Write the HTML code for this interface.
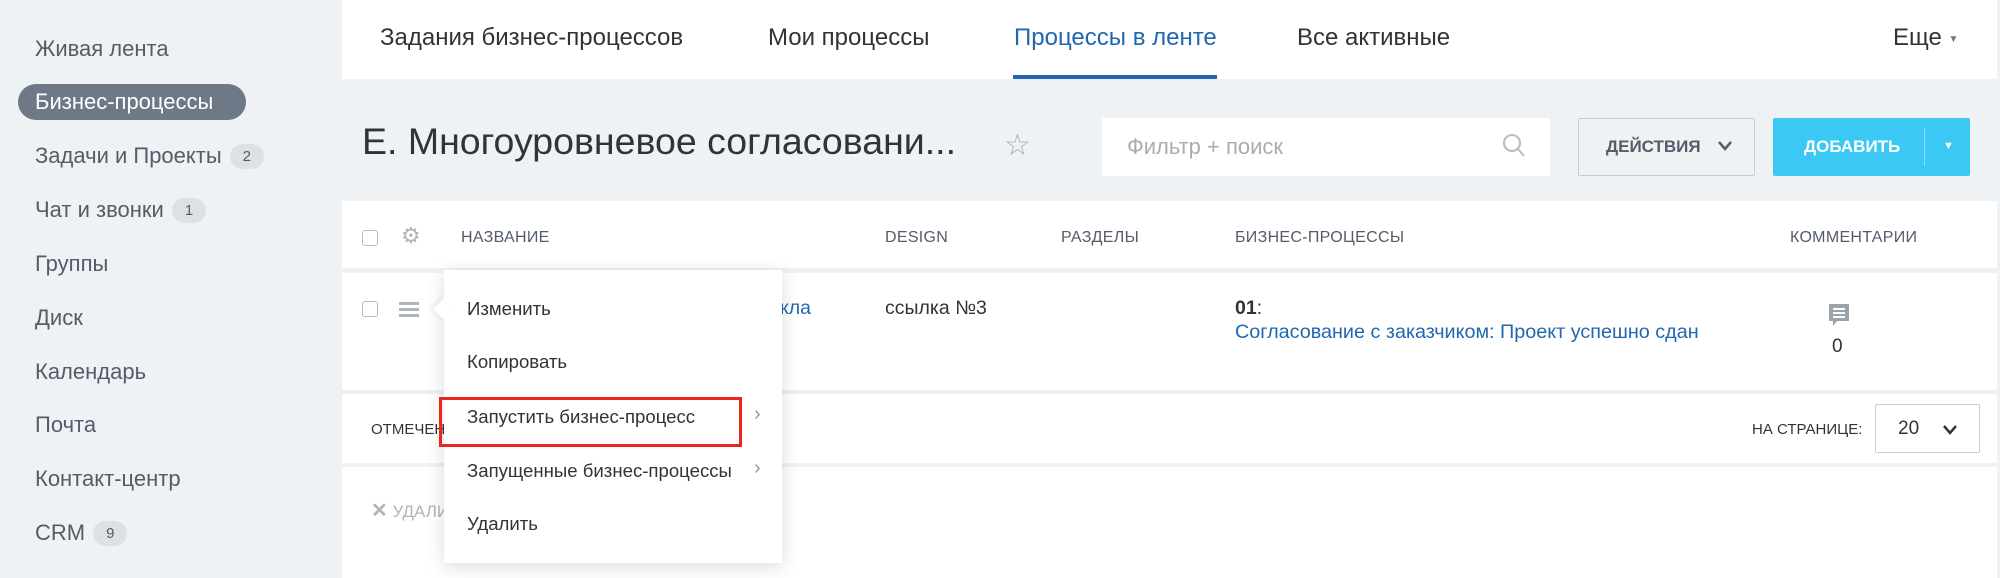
<!DOCTYPE html>
<html><head><meta charset="utf-8"><style>
*{margin:0;padding:0;box-sizing:border-box}
body{width:2000px;height:578px;overflow:hidden;background:#eef2f4;font-family:"Liberation Sans",sans-serif;position:relative;color:#333}
.a{position:absolute;white-space:nowrap}
.side{font-size:22px;color:#535c69}
.badge{display:inline-block;background:#dde1e6;color:#535c69;font-size:15px;border-radius:14px;padding:4px 13px;margin-left:8px;vertical-align:2px}
.tab{font-size:24px;color:#333;top:24px}
.th{font-size:16px;color:#535c69;top:229px;letter-spacing:.3px}
.mi{font-size:18.6px;color:#333;left:467px}
.chev{font-size:20px;color:#999;left:754px}
</style></head><body>
<!-- sidebar -->
<div class="a side" style="left:35px;top:36px">Живая лента</div>
<div class="a" style="left:18px;top:84px;width:228px;height:36px;background:#6e7886;border-radius:18px"></div>
<div class="a side" style="left:35px;top:89px;color:#fff">Бизнес-процессы</div>
<div class="a side" style="left:35px;top:143px">Задачи и Проекты<span class="badge">2</span></div>
<div class="a side" style="left:35px;top:197px">Чат и звонки<span class="badge">1</span></div>
<div class="a side" style="left:35px;top:251px">Группы</div>
<div class="a side" style="left:35px;top:305px">Диск</div>
<div class="a side" style="left:35px;top:359px">Календарь</div>
<div class="a side" style="left:35px;top:412px">Почта</div>
<div class="a side" style="left:35px;top:466px">Контакт-центр</div>
<div class="a side" style="left:35px;top:520px">CRM<span class="badge">9</span></div>
<!-- top bar -->
<div class="a" style="left:342px;top:0;width:1655px;height:79px;background:#fff"></div>
<div class="a tab" style="left:380px">Задания бизнес-процессов</div>
<div class="a tab" style="left:768px">Мои процессы</div>
<div class="a tab" style="left:1014px;color:#2067b0">Процессы в ленте</div>
<div class="a" style="left:1013px;top:75px;width:204px;height:4px;background:#2067b0"></div>
<div class="a tab" style="left:1297px">Все активные</div>
<div class="a tab" style="left:1893px">Еще <span style="font-size:10px;color:#777;vertical-align:3px">▼</span></div>
<!-- title area -->
<div class="a" style="left:362px;top:120px;font-size:37.5px;color:#333">Е. Многоуровневое согласовани...</div>
<div class="a" style="left:1004px;top:128px;font-size:30px;color:#a8adb4">☆</div>
<div class="a" style="left:1102px;top:118px;width:448px;height:58px;background:#fff;border-radius:2px"></div>
<div class="a" style="left:1127px;top:134px;font-size:22px;color:#a8adb4">Фильтр + поиск</div>
<svg class="a" style="left:1502px;top:133px" width="24" height="26" viewBox="0 0 24 26"><circle cx="10" cy="10" r="8" fill="none" stroke="#bbb" stroke-width="2"/><path d="M16 16l6 7" stroke="#bbb" stroke-width="2"/></svg>
<div class="a" style="left:1578px;top:118px;width:177px;height:58px;border:1px solid #c6cdd3;background:#eef2f4;border-radius:2px"></div>
<div class="a" style="left:1606px;top:137px;font-size:17px;font-weight:bold;color:#535c69">ДЕЙСТВИЯ</div>
<svg class="a" style="left:1717px;top:140px" width="16" height="12"><path d="M2 2l6 7 6-7" fill="none" stroke="#535c69" stroke-width="2.5"/></svg>
<div class="a" style="left:1773px;top:118px;width:197px;height:58px;background:#3bc8f5;border-radius:2px"></div>
<div class="a" style="left:1804px;top:137px;font-size:17px;font-weight:bold;color:#fff">ДОБАВИТЬ</div>
<div class="a" style="left:1924px;top:128px;width:1px;height:38px;background:#8fdcf7"></div>
<div class="a" style="left:1943px;top:140px;font-size:11px;color:#fff">▼</div>
<!-- table -->
<div class="a" style="left:342px;top:201px;width:1655px;height:67px;background:#fff"></div>
<div class="a" style="left:362px;top:230px;width:16px;height:16px;border:1px solid #bbb;border-radius:3px"></div>
<div class="a" style="left:401px;top:223px;font-size:22px;color:#b0b5ba">⚙</div>
<div class="a th" style="left:461px">НАЗВАНИЕ</div>
<div class="a th" style="left:885px">DESIGN</div>
<div class="a th" style="left:1061px">РАЗДЕЛЫ</div>
<div class="a th" style="left:1235px">БИЗНЕС-ПРОЦЕССЫ</div>
<div class="a th" style="left:1790px">КОММЕНТАРИИ</div>
<div class="a" style="left:342px;top:273px;width:1655px;height:117px;background:#fff"></div>
<div class="a" style="left:362px;top:301px;width:16px;height:16px;border:1px solid #bbb;border-radius:3px"></div>
<div class="a" style="left:399px;top:302px;width:20px;height:3px;background:#b0b5ba;box-shadow:0 6px 0 #b0b5ba,0 12px 0 #b0b5ba"></div>
<div class="a" style="left:780px;top:297px;font-size:19.5px;color:#2067b0">кла</div>
<div class="a" style="left:885px;top:297px;font-size:19.5px;color:#333">ссылка №3</div>
<div class="a" style="left:1235px;top:297px;font-size:19.5px;color:#333"><b>01</b>:</div>
<div class="a" style="left:1235px;top:321px;font-size:19.8px;color:#2067b0">Согласование с заказчиком: Проект успешно сдан</div>
<svg class="a" style="left:1827px;top:302px" width="24" height="28"><path d="M2 2h20v17H10l-4 5v-5H2z" fill="#9aa3ab"/><path d="M6 7h12M6 11h12M6 15h12" stroke="#fff" stroke-width="2"/></svg>
<div class="a" style="left:1832px;top:336px;font-size:19px;color:#333">0</div>
<div class="a" style="left:342px;top:394px;width:1655px;height:69px;background:#fff"></div>
<div class="a" style="left:371px;top:421px;font-size:15px;color:#333">ОТМЕЧЕНО</div>
<div class="a" style="left:1752px;top:421px;font-size:15px;color:#333">НА СТРАНИЦЕ:</div>
<div class="a" style="left:1875px;top:404px;width:105px;height:49px;border:1px solid #c6cdd3;border-radius:2px;background:#fff"></div>
<div class="a" style="left:1898px;top:418px;font-size:19px;color:#333">20</div>
<svg class="a" style="left:1942px;top:424px" width="16" height="12"><path d="M2 2l6 7 6-7" fill="none" stroke="#333" stroke-width="2.5"/></svg>
<div class="a" style="left:342px;top:467px;width:1655px;height:111px;background:#fff"></div>
<div class="a" style="left:371px;top:498px;font-size:17px;color:#b0b5ba"><b style="font-size:20px">✕</b> УДАЛИТЬ</div>
<!-- menu -->
<div class="a" style="left:444px;top:270px;width:338px;height:293px;background:#fff;box-shadow:0 4px 18px rgba(0,0,0,.14)"></div>
<div class="a" style="left:436px;top:302px;width:14px;height:14px;background:#fff;transform:rotate(45deg);box-shadow:-2px 2px 4px rgba(0,0,0,.07)"></div>
<div class="a mi" style="top:298px">Изменить</div>
<div class="a mi" style="top:351px">Копировать</div>
<div class="a mi" style="top:406px">Запустить бизнес-процесс</div>
<div class="a chev" style="top:403px">›</div>
<div class="a" style="left:439px;top:397px;width:303px;height:50px;border:3px solid #e8271f"></div>
<div class="a mi" style="top:460px">Запущенные бизнес-процессы</div>
<div class="a chev" style="top:457px">›</div>
<div class="a mi" style="top:513px">Удалить</div>
</body></html>
